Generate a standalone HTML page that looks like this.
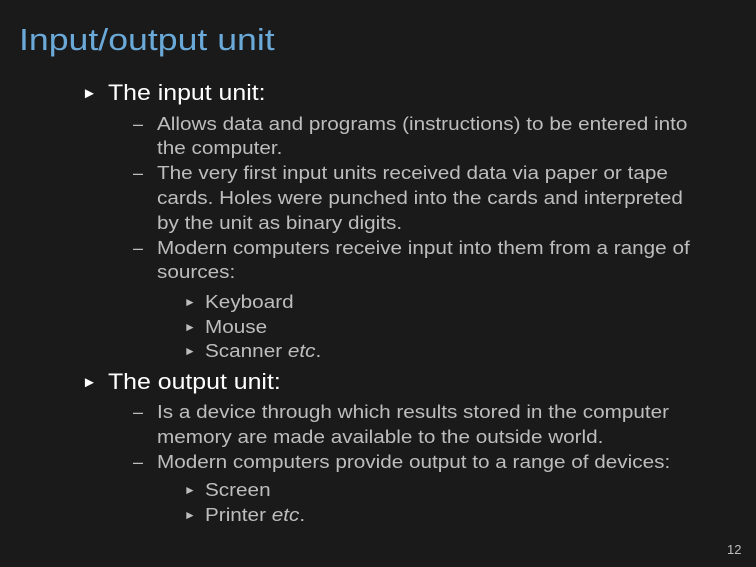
<!DOCTYPE html>
<html><head><meta charset="utf-8"><style>
body{margin:0;width:756px;height:567px;background:#1a1a1a;overflow:hidden;font-family:"Liberation Sans",sans-serif;position:relative}
.l{position:absolute;white-space:nowrap;height:24px;line-height:24px;transform-origin:0 50%}
.s{transform:scaleX(1.15)}
.t{color:#6aa9d8;font-size:31px;left:19px;top:22px;height:36px;line-height:36px}
.a{color:#fff;font-size:22px;left:108px;transform:scaleX(1.13)}
.b{color:#bdbdbd;font-size:18px;left:157px}
.c{color:#bdbdbd;font-size:18px;left:205px}
.ab{position:absolute;color:#fff;font-size:15px;left:82px}
.d{position:absolute;color:#bdbdbd;font-size:18px;left:133px}
.cb{position:absolute;color:#bdbdbd;font-size:12px;left:184px}
i{font-style:italic}
</style></head><body>
<div class="l t s">Input/output unit</div>
<div class="l ab" style="top:82px">&#9658;</div>
<div class="l a" style="top:81px">The input unit:</div>
<div class="l d" style="top:112px">–</div>
<div class="l b s" style="top:112px">Allows data and programs (instructions) to be entered into</div>
<div class="l b s" style="top:136px">the computer.</div>
<div class="l d" style="top:161px">–</div>
<div class="l b s" style="top:161px">The very first input units received data via paper or tape</div>
<div class="l b s" style="top:186px">cards. Holes were punched into the cards and interpreted</div>
<div class="l b s" style="top:211px">by the unit as binary digits.</div>
<div class="l d" style="top:236px">–</div>
<div class="l b s" style="top:236px">Modern computers receive input into them from a range of</div>
<div class="l b s" style="top:260px">sources:</div>
<div class="l cb" style="top:290px">&#9658;</div>
<div class="l c s" style="top:290px">Keyboard</div>
<div class="l cb" style="top:315px">&#9658;</div>
<div class="l c s" style="top:315px">Mouse</div>
<div class="l cb" style="top:339px">&#9658;</div>
<div class="l c s" style="top:339px">Scanner <i>etc</i>.</div>
<div class="l ab" style="top:371px">&#9658;</div>
<div class="l a" style="top:370px">The output unit:</div>
<div class="l d" style="top:400px">–</div>
<div class="l b s" style="top:400px">Is a device through which results stored in the computer</div>
<div class="l b s" style="top:425px">memory are made available to the outside world.</div>
<div class="l d" style="top:450px">–</div>
<div class="l b s" style="top:450px">Modern computers provide output to a range of devices:</div>
<div class="l cb" style="top:478px">&#9658;</div>
<div class="l c s" style="top:478px">Screen</div>
<div class="l cb" style="top:503px">&#9658;</div>
<div class="l c s" style="top:503px">Printer <i>etc</i>.</div>
<div class="l" style="color:#bdbdbd;font-size:13px;left:727px;top:538px">12</div>
</body></html>
